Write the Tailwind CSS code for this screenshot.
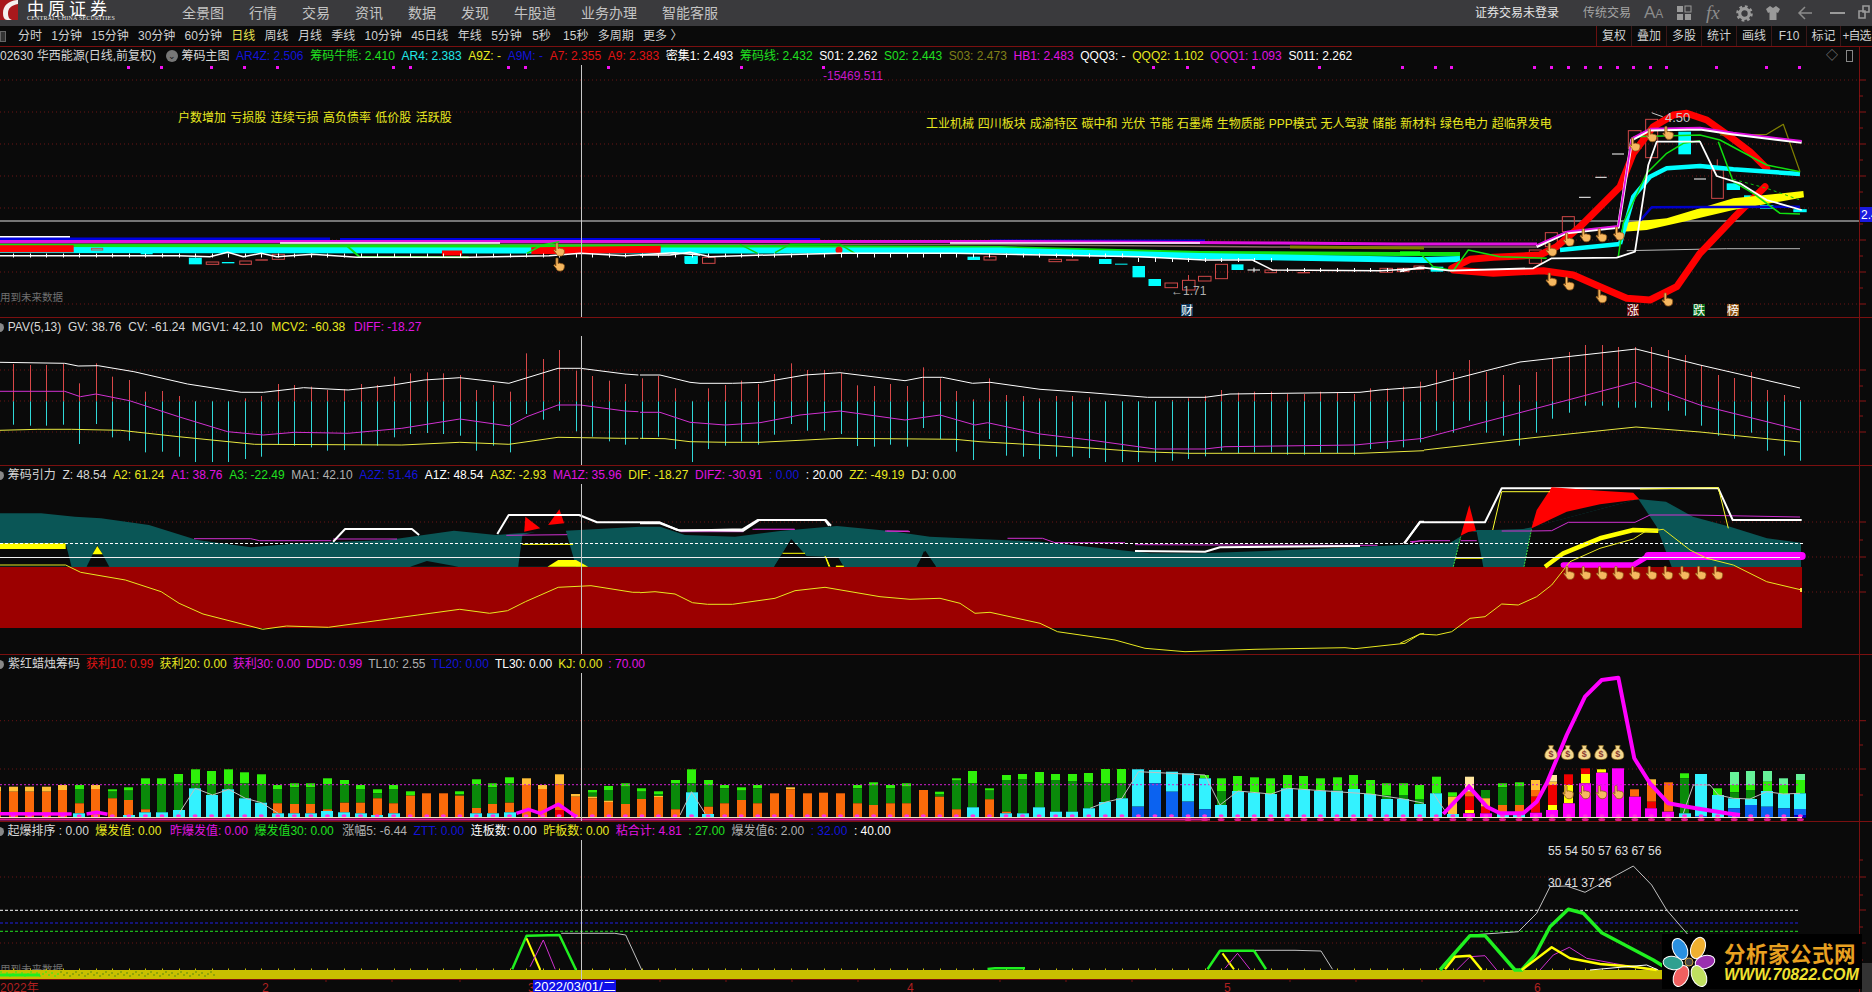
<!DOCTYPE html>
<html lang="zh">
<head>
  <meta charset="UTF-8">
  <title>华西能源 日线</title>
  <script src="https://cdn.jsdelivr.net/npm/@tailwindcss/browser@4"></script>
</head>
<body class="relative w-[1872px] h-[992px] overflow-hidden flex flex-col bg-[#0a0a0a] text-[#d8d8d8] text-xs font-['Liberation_Sans','Noto_Sans_CJK_SC',sans-serif]">

  <!-- shared glyphs -->
  <svg class="absolute w-0 h-0">
    <symbol id="hand" viewBox="0 0 13 15">
      <path d="M3 1.200c0-1.200 2.200-1.200 2.200 0V6l1.600-.4 1.500.5 1.500.2 1.300.8c.6.6.5 2 .3 3-.3 2.400-1.800 3.500-4 3.500-2.300 0-3.500-.8-4.200-2.800L1 8.200c-.3-1 .9-1.400 1.400-.6L3 8.500z" fill="#f6b860" stroke="#8a5418" stroke-width=".8"/>
    </symbol>
    <symbol id="bag" viewBox="0 0 14 16">
      <path d="M4.500 1.200 9.500 1.200 8.600 4.200C12 6 13.600 9 13.200 12c-.3 2.300-2.400 3.300-6.200 3.300S1.100 14.300.8 12C.4 9 2 6 5.400 4.200z" fill="#f4d890" stroke="#8a6a20" stroke-width=".7"/>
      <text x="7" y="13" text-anchor="middle" font-size="9" font-weight="700" fill="#8a3a30">$</text>
    </symbol>
  </svg>

  <!-- title bar -->
  <header class="h-[26px] shrink-0 flex items-center bg-[#3a3a3d] overflow-hidden">
    <div class="w-[182px] h-[26px] flex shrink-0">
      <svg class="w-[20px] h-[26px] shrink-0" viewBox="0 0 20 26">
        <rect width="18" height="20" fill="#f4f0ee"/>
        <path d="M17 0C8 1 3 6 3 13s3 7 7 7H0V0z" fill="#a8181c"/>
        <path d="M18 4C12 5 8 8 8 13s2 7 5 7h5z" fill="#a8181c"/>
      </svg>
      <div class="pl-[7px] flex flex-col">
        <span class="block h-[15px] leading-[15px] text-[17px] text-white font-['Noto_Sans_CJK_SC',sans-serif] tracking-[4px] whitespace-nowrap">中原证券</span>
        <span class="block text-[6px] leading-[7px] text-[#e8e8e8] font-['Liberation_Serif',serif] whitespace-nowrap tracking-[.2px]">CENTRAL CHINA SECURITIES</span>
      </div>
    </div>
    <nav class="flex items-center gap-[25px] text-sm text-[#c4c4c4]">
      <span>全景图</span><span>行情</span><span>交易</span><span>资讯</span><span>数据</span><span>发现</span><span>牛股道</span><span>业务办理</span><span>智能客服</span>
    </nav>
    <div class="ml-auto flex items-center h-full">
      <span class="text-[#e4e4e4]">证券交易未登录</span>
      <span class="ml-[24px] text-[#a4a4a4]">传统交易</span>
      <span class="ml-[13px] w-[20px] text-[#8c8c8c] text-[17px] whitespace-nowrap font-['Liberation_Sans']">A<span class="text-[12px]">A</span></span>
      <svg class="ml-[12px] w-[16px] h-[16px]" viewBox="0 0 16 16" fill="#9a9a9a"><rect x="1" y="1" width="6" height="6"/><rect x="9" y="1" width="6" height="6" fill="none" stroke="#9a9a9a"/><rect x="1" y="9" width="6" height="6"/><rect x="9" y="9" width="6" height="6"/></svg>
      <span class="ml-[14px] w-[18px] text-[#8c8c8c] text-[19px] italic font-['Liberation_Serif',serif]">fx</span>
      <svg class="ml-[12px] w-[17px] h-[17px]" viewBox="0 0 16 16"><circle cx="8" cy="8" r="4.500" fill="none" stroke="#9a9a9a" stroke-width="3"/><circle cx="8" cy="8" r="6.600" fill="none" stroke="#9a9a9a" stroke-width="2.400" stroke-dasharray="2.600 2.600"/></svg>
      <svg class="ml-[12px] w-[16px] h-[16px]" viewBox="0 0 16 16"><path d="M5 1 1 4l2 4 1.500-.8V15h7V7.200L13 8l2-4-4-3-3 2z" fill="#9a9a9a"/></svg>
      <svg class="ml-[16px] w-[16px] h-[16px]" viewBox="0 0 16 16"><path d="M8 2 2 8l6 6M2 8h13" fill="none" stroke="#8c8c8c" stroke-width="1.500"/></svg>
      <span class="ml-[17px] w-[15px] h-[2px] bg-[#9a9a9a]"></span>
      <svg class="ml-[13px] w-[14px] h-[16px] shrink-0" viewBox="0 0 14 16"><path d="M5 1h6v6H5zM1 6h6v7H1z" fill="none" stroke="#9a9a9a" stroke-width="1.600"/></svg>
    </div>
  </header>

  <!-- period toolbar -->
  <div class="h-[21px] shrink-0 flex items-center border-b border-[#7a1010] text-[#d0d0d0]">
    <span class="w-[6px] h-[11px] border border-[#666] bg-[#333] shrink-0"></span>
    <div class="ml-[12px] flex items-center gap-[9.3px] whitespace-nowrap">
      <span>分时</span><span>1分钟</span><span>15分钟</span><span>30分钟</span><span>60分钟</span>
      <span class="text-[#e8e050]">日线</span>
      <span>周线</span><span>月线</span><span>季线</span><span>10分钟</span><span>45日线</span><span>年线</span><span>5分钟</span><span class="px-[1px]">5秒</span><span class="pl-[2px]">15秒</span><span>多周期</span><span>更多 〉</span>
    </div>
    <div class="ml-auto flex h-full w-[276px] shrink-0">
      <span class="w-[35px] flex items-center justify-center border-l border-[#6a1010]">复权</span>
      <span class="w-[35px] flex items-center justify-center border-l border-[#3a1818]">叠加</span>
      <span class="w-[35px] flex items-center justify-center border-l border-[#3a1818]">多股</span>
      <span class="w-[35px] flex items-center justify-center border-l border-[#3a1818]">统计</span>
      <span class="w-[35px] flex items-center justify-center border-l border-[#3a1818]">画线</span>
      <span class="w-[35px] flex items-center justify-center border-l border-[#3a1818]">F10</span>
      <span class="w-[34px] flex items-center justify-center border-l border-[#3a1818]">标记</span>
      <span class="w-[32px] flex items-center justify-center border-l border-[#3a1818] whitespace-nowrap tracking-[-1px]">+自选</span>
    </div>
  </div>

  <!-- chart area + right scale -->
  <main class="flex h-[945px] shrink-0">
    <div class="w-[1859px] shrink-0 flex flex-col">

      <section class="h-[270px] shrink-0 flex flex-col">
        <div class="h-[18px] shrink-0 flex items-center gap-[6.7px] whitespace-nowrap relative">
          <span class="pr-[3px]">02630 华西能源(日线,前复权)</span>
          <span class="w-[12px] h-[12px] rounded-full bg-[#777] text-[#111] text-[9px] leading-[12px] text-center">⌄</span>
          <span class="-ml-[3px]">筹码主图</span>
          <span class="text-[#1414d8]">AR4Z: 2.506</span>
          <span class="text-[#20e020]">筹码牛熊: 2.410</span>
          <span class="text-[#20e8e8]">AR4: 2.383</span>
          <span class="text-[#e8e820]">A9Z: -</span>
          <span class="text-[#1414d8]">A9M: -</span>
          <span class="text-[#e01414]">A7: 2.355</span>
          <span class="text-[#e01414]">A9: 2.383</span>
          <span class="text-white">密集1: 2.493</span>
          <span class="text-[#20e020]">筹码线: 2.432</span>
          <span class="text-white">S01: 2.262</span>
          <span class="text-[#20e020]">S02: 2.443</span>
          <span class="text-[#808018]">S03: 2.473</span>
          <span class="text-[#e014e0]">HB1: 2.483</span>
          <span class="text-white">QQQ3: -</span>
          <span class="text-[#e8e820]">QQQ2: 1.102</span>
          <span class="text-[#e014e0]">QQQ1: 1.093</span>
          <span class="text-white">S011: 2.262</span>
          <span class="absolute left-[1826px] text-[#888]">◇</span>
          <span class="absolute left-[1846px] w-[7px] h-[12px] border border-[#888]"></span>
        </div>
        <svg id="p1" class="block" width="1859" height="252" viewBox="0 65 1859 252"></svg>
      </section>

      <section class="h-[148px] shrink-0 flex flex-col border-t border-[#7a1010]">
        <div class="h-[18px] shrink-0 flex items-center gap-[6.7px] whitespace-nowrap">
          <span class="-ml-[5px] w-[9px] h-[9px] rounded-full bg-[#888]"></span>
          <span class="-ml-[3px]">PAV(5,13)</span><span>GV: 38.76</span><span>CV: -61.24</span><span>MGV1: 42.10</span>
          <span class="ml-[2px] text-[#e8e820]">MCV2: -60.38</span>
          <span class="ml-[2px] text-[#e014e0]">DIFF: -18.27</span>
        </div>
        <svg id="p2" class="block" width="1859" height="129" viewBox="0 336 1859 129"></svg>
      </section>

      <section class="h-[189px] shrink-0 flex flex-col border-t border-[#7a1010]">
        <div class="h-[18px] shrink-0 flex items-center gap-[6.7px] whitespace-nowrap">
          <span class="-ml-[5px] w-[9px] h-[9px] rounded-full bg-[#888]"></span>
          <span class="-ml-[3px]">筹码引力</span><span>Z: 48.54</span>
          <span class="text-[#e8e820]">A2: 61.24</span>
          <span class="text-[#e014e0]">A1: 38.76</span>
          <span class="text-[#20e020]">A3: -22.49</span>
          <span class="text-[#b0b0b0]">MA1: 42.10</span>
          <span class="text-[#1414d8]">A2Z: 51.46</span>
          <span class="text-white">A1Z: 48.54</span>
          <span class="text-[#e8e820]">A3Z: -2.93</span>
          <span class="text-[#e014e0]">MA1Z: 35.96</span>
          <span class="text-[#e8e820]">DIF: -18.27</span>
          <span class="text-[#e014e0]">DIFZ: -30.91</span>
          <span class="text-[#1414d8]">: 0.00</span>
          <span class="text-white">: 20.00</span>
          <span class="text-[#e8e820]">ZZ: -49.19</span>
          <span class="text-[#e8e8c0]">DJ: 0.00</span>
        </div>
        <svg id="p3" class="block" width="1859" height="170" viewBox="0 484 1859 170"></svg>
      </section>

      <section class="h-[167px] shrink-0 flex flex-col border-t border-[#7a1010]">
        <div class="h-[18px] shrink-0 flex items-center gap-[6px] whitespace-nowrap">
          <span class="-ml-[5px] w-[9px] h-[9px] rounded-full bg-[#888]"></span>
          <span class="-ml-[2px]">紫红蜡烛筹码</span>
          <span class="text-[#e01414]">获利10: 0.99</span>
          <span class="text-[#e8e820]">获利20: 0.00</span>
          <span class="text-[#e014e0]">获利30: 0.00</span>
          <span class="text-[#e014e0]">DDD: 0.99</span>
          <span class="text-[#b0b0b0]">TL10: 2.55</span>
          <span class="text-[#1414d8]">TL20: 0.00</span>
          <span class="text-white">TL30: 0.00</span>
          <span class="text-[#e8e820]">KJ: 0.00</span>
          <span class="text-[#e014e0]">: 70.00</span>
        </div>
        <svg id="p4" class="block" width="1859" height="148" viewBox="0 673 1859 148"></svg>
      </section>

      <section class="h-[158px] shrink-0 flex flex-col border-t border-[#7a1010]">
        <div class="h-[18px] shrink-0 flex items-center gap-[6.5px] whitespace-nowrap">
          <span class="-ml-[5px] w-[9px] h-[9px] rounded-full bg-[#888]"></span>
          <span class="-ml-[3px]">起爆排序 : 0.00</span>
          <span class="text-[#e8e820]">爆发值: 0.00</span>
          <span class="ml-[2px] text-[#e014e0]">昨爆发值: 0.00</span>
          <span class="text-[#20e020]">爆发值30: 0.00</span>
          <span class="ml-[2px] text-[#b0b0b0]">涨幅5: -6.44</span>
          <span class="text-[#1414d8]">ZTT: 0.00</span>
          <span class="text-white">连板数: 0.00</span>
          <span class="text-[#e8e820]">昨板数: 0.00</span>
          <span class="text-[#e014e0]">粘合计: 4.81</span>
          <span class="text-[#20e020]">: 27.00</span>
          <span class="text-[#b0b0b0]">爆发值6: 2.00</span>
          <span class="text-[#1414d8]">: 32.00</span>
          <span class="text-white">: 40.00</span>
        </div>
        <svg id="p5" class="block" width="1859" height="139" viewBox="0 840 1859 139"></svg>
      </section>

      <svg id="dates" class="block" width="1859" height="13" viewBox="0 979 1859 13"></svg>
    </div>
    <svg id="scale" class="block" width="13" height="945" viewBox="1859 47 13 945"></svg>
  </main>

  <!-- watermark over the bottom right corner -->
  <div class="absolute left-[1662px] top-[934px] w-[200px] h-[55px] bg-black flex items-center">
    <svg class="w-[54px] h-[52px] shrink-0" viewBox="-27 -26 54 52">
      <g stroke="#fff" stroke-width="1">
        <ellipse cx="-9" cy="-13" rx="7" ry="11" transform="rotate(-25 -9 -13)" fill="#2a90e0"/>
        <ellipse cx="9" cy="-14" rx="7" ry="11" transform="rotate(20 9 -14)" fill="#f0b030"/>
        <ellipse cx="16" cy="0" rx="10" ry="6.500" transform="rotate(-15 16 0)" fill="#9a30b0"/>
        <ellipse cx="10" cy="14" rx="7" ry="11" transform="rotate(-25 10 14)" fill="#c0e060"/>
        <ellipse cx="-8" cy="14" rx="7" ry="11" transform="rotate(25 -8 14)" fill="#f06060"/>
        <ellipse cx="-16" cy="1" rx="10" ry="6.500" transform="rotate(10 -16 1)" fill="#30a090"/>
      </g>
      <circle r="4" fill="#444" stroke="#caa040"/>
    </svg>
    <div class="ml-[8px] flex flex-col">
      <span class="text-[21.500px] leading-[27px] font-bold tracking-[.5px] text-[#e8a020] font-['Noto_Sans_CJK_SC',sans-serif] whitespace-nowrap">分析家公式网</span>
      <span class="text-[16px] leading-[18px] font-bold italic text-[#f0e030] font-['Liberation_Sans',sans-serif] whitespace-nowrap">WWW.70822.COM</span>
    </div>
  </div>

  <script>
    // crop offsets used while reading the chart: [x0, y0, scaleX, scaleY]
    const M = {
      P: [0, 0, 1, 1],
      A: [0, 210, 2.24, 3], B: [640, 210, 2, 3], C: [1400, 90, 3, 3],
      D: [0, 460, 1.675, 3], E: [640, 470, 2, 3], F: [1400, 470, 3, 3],
      G: [0, 650, 1.675, 3], H: [1400, 650, 3, 3],
      I: [0, 830, 1.675, 3], J: [1400, 830, 3, 3]
    };
    const px = (z, x) => M[z][0] + x / M[z][2];
    const py = (z, y) => M[z][1] + y / M[z][3];
    const pts = (z, s) => s.trim().split(/\s+/).map(t => {
      const [a, b] = t.split(',');
      return px(z, +a).toFixed(1) + ',' + py(z, +b).toFixed(1);
    }).join(' ');
    const line = (z, s, c, w = 1, extra = '') => `<polyline points="${pts(z, s)}" fill="none" stroke="${c}" stroke-width="${w}" stroke-linejoin="round" ${extra}/>`;
    const poly = (z, s, c) => `<polygon points="${pts(z, s)}" fill="${c}"/>`;
    const box = (z, a, b, c, d, fill, stroke = 'none') => `<rect x="${px(z, a)}" y="${py(z, b)}" width="${(c - a) / M[z][2]}" height="${(d - b) / M[z][3]}" fill="${fill}" stroke="${stroke}"/>`;
    const use = (z, id, x, y, w, h) => `<use href="#${id}" x="${px(z, x) - w / 2}" y="${py(z, y) - h / 2}" width="${w}" height="${h}"/>`;
    const text = (x, y, s, c, size = 12, extra = '') => `<text x="${x}" y="${y}" fill="${c}" font-size="${size}" ${extra}>${s}</text>`;
    const dotted = ys => ys.map(y => `<line x1="0" x2="1859" y1="${y}" y2="${y}" stroke="#6a1414" stroke-dasharray="1 3"/>`).join('');
    const cross = (y1, y2) => `<line x1="581.5" x2="581.5" y1="${y1}" y2="${y2}" stroke="#c8c8c8"/>`;
    const barX = i => 13 + 16.55 * i;
    const crisp = x => Math.round(x) + .5;

    // ---- panel 1: candles + moving average bands
    let s = dotted([80, 112, 144, 176, 208, 240, 272, 304]);
    [128,161,211,244,277,393,410,508,525,608,741,823,1153,1187,1253,1319,1402,1435,1451,1534,1551,1568,1585,1600,1617,1633,1650,1666,1716,1766,1799]
      .forEach(x => s += `<rect x="${x - 1}" y="66" width="3" height="3" fill="#f010f0"/>`);
    s += text(823, 80, '-15469.511', '#c818c8');
    s += text(178, 122, '户数增加 亏损股 连续亏损 高负债率 低价股 活跃股', '#e8e820', 12, 'word-spacing="1"');
    s += text(926, 128, '工业机械 四川板块 成渝特区 碳中和 光伏 节能 石墨烯 生物质能 PPP模式 无人驾驶 储能 新材料 绿色电力 超临界发电', '#e8e820', 12, 'word-spacing=".5"');
    s += text(0, 301, '用到未来数据', '#707070', 10.500);
    s += line('P', '0,221 1859,221', '#e0e0e0');
    s += line('P', '0,237 70,237', '#ffffff', 2);
    s += line('P', '0,239 330,239', '#0000e0', 3) + line('P', '340,239.5 820,239.5', '#0000e0', 3) + line('P', '990,241 1205,241', '#0000c8', 3);
    s += line('P', '0,241.5 1000,241.5 1280,243 1400,244 1537,244', '#e010e0', 3);
    s += line('P', '0,244 1000,244.5 1280,247 1537,247', '#8a6a6a', 1.500);
    s += line('P', '280,243 500,243', '#ffffff', 1.500) + line('P', '950,243 1200,243', '#ffffff', 1.500);
    s += line('P', '1290,247 1424,248', '#808000', 3);
    s += line('P', '0,246 640,246.500 1000,248 1200,253 1400,254 1460,254', '#10e010', 4);
    s += line('P', '0,250 640,250.500 1000,250.500 1200,256 1424,260 1460,259', '#00ffff', 6);
    s += line('A', '0,116 165,116', '#ff0000', 7) + line('A', '1190,122 1480,118', '#ff0000', 7) + line('A', '990,129 1035,129', '#ff0000', 5);
    s += line('B', '0,118 40,118', '#ff0000', 6);
    s += `<circle cx="839" cy="250" r="3.500" fill="#f01010"/>`;
    s += line('A', '775,105 805,140 1050,142', '#10e010', 2) + line('A', '1180,130 1215,105 1253,95', '#10e010', 1.500);
    s += line('B', '200,103 235,130', '#10d010', 1.500) + line('B', '270,128 300,103 400,103 430,130', '#10d010', 1.500);
    // candles
    [[205,115,230,120,0],[462,156,490,163,0],[537,153,563,163,0],[610,133,637,148,0],[315,118,342,133,1],[423,143,452,163,1],[497,156,525,160,1],[1533,138,1563,160,1]]
      .forEach(c => s += box('A', c[0], c[1], c[2], c[3], c[4] ? '#00ffff' : 'none', c[4] ? 'none' : '#d04848'));
    s += box('A', 572, 148, 600, 152, '#d04848');
    [[125,142,150,160,0],[688,140,712,150,0],[818,148,843,155,0],[1050,219,1075,233,0],[1085,211,1110,240,0],[1117,199,1142,213,0],[1151,163,1175,206,0],[1250,180,1273,188,0],[1480,175,1505,187,0],[1515,175,1538,185,0],[1548,168,1568,178,0],
     [90,138,115,162,1],[655,140,680,150,1],[918,147,943,162,1],[950,161,975,164,1],[985,168,1010,202,1],[1017,207,1042,228,1],[1183,163,1207,180,1]]
      .forEach(c => s += box('B', c[0], c[1], c[2], c[3], c[4] ? '#00ffff' : 'none', c[4] ? 'none' : '#d04848'));
    s += box('B', 852, 148, 877, 152, '#d04848') + box('B', 1315, 186, 1340, 190, '#d04848');
    s += line('B', '1097,195 1097,211', '#d04848') + line('B', '1215,180 1240,180', '#fff') + line('B', '1228,173 1228,187', '#fff');
    [[685,122,723,175],[737,88,773,203],[487,380,523,425],[436,428,472,470],[388,480,424,520],[935,240,970,325]]
      .forEach(c => s += box('C', c[0], c[1], c[2], c[3], 'none', '#d04848'));
    s += line('C', '952,208 952,240', '#d04848');
    [[835,125,873,193],[980,280,1020,300],[92,530,130,545],[1032,316,1065,324],[1080,345,1120,356]]
      .forEach(c => s += box('C', c[0], c[1], c[2], c[3], '#00ffff'));
    [[636,192,672],[586,262,620],[537,322,572],[882,267,918]]
      .forEach(c => s += line('C', `${c[0]},${c[1]} ${c[2]},${c[1]}`, '#ffffff'));
    s += line('C', '680,482 780,480 980,476 1200,476', '#b8b8b8');
    // right side lines
    s += line('C', '155,535 210,508 280,502 420,495 470,470 540,410 600,350 660,290 700,190 760,110 820,75 860,70 920,90 990,140 1050,185 1100,235', '#ff0000', 7, 'stroke-linecap="round"');
    s += line('C', '160,540 280,550 430,542 520,555 600,590 680,625 750,630 830,590 900,490 1000,385 1095,290', '#ff0000', 7, 'stroke-linecap="round"');
    s += poly('C', '670,398 800,385 1000,325 1210,303 1212,322 1000,360 850,395 740,420 670,425', '#ffff00');
    s += line('C', '720,392 755,352 1200,350', '#0000c8', 2.500);
    s += line('C', '960,135 1100,133 1150,103 1200,245', '#808000', 1.200);
    s += line('C', '0,488 60,490 100,530 160,542 205,480 300,500 440,505', '#10e010', 1.500);
    s += line('C', '0,490 60,490', '#10ff10', 4);
    s += line('C', '480,480 660,462', '#00ffff', 4.500) + line('C', '660,462 700,320 750,260 800,235 900,228 1000,238 1200,252', '#00ffff', 4.500);
    s += line('C', '655,500 670,400 740,250 800,190 850,160 900,152', '#10e010', 1.500);
    s += line('C', '700,140 900,135 960,150 1100,225 1200,245', '#10e010', 1.500);
    s += line('C', '955,155 1000,275 1060,310 1140,370 1200,372', '#10e010', 1.500);
    s += line('C', '1000,268 1100,295 1200,330', '#10c010', 1, 'stroke-dasharray="3 3"');
    s += line('C', '1180,362 1220,362', '#00ffff', 3);
    s += line('C', '0,544 60,532 150,542 400,535 455,505 650,503 705,485 745,225 770,155 900,155 950,258 1020,280 1100,330 1205,360', '#ffffff', 1.800);
    s += line('C', '410,470 500,428 655,412 695,150 750,120 900,117 1000,132 1205,157', '#ffffff', 3);
    s += line('C', '410,465 500,425 655,408 695,145 750,116 900,113 1000,128 1205,153', '#e010e0', 1.800);
    s += line('A', '0,137 400,137 470,140 510,127 545,140 585,130 620,140 700,133 800,142 1050,142 1230,137 1300,130 1400,137 1510,128 1568,135', '#ffffff', 1.500);
    s += line('B', '0,135 60,135 100,127 140,140 200,137 400,130 630,130 1000,140 1130,150 1225,150 1265,180 1480,182 1568,175', '#ffffff', 1.500);
    for (let i = 0; i < 85; i++) {
      const x = barX(i), y = x < 1130 ? 255.5 : x < 1272 ? 260 : 270;
      s += `<line x1="${crisp(x)}" x2="${crisp(x)}" y1="${y - 2}" y2="${y + 2}" stroke="#ffffff"/>`;
    }
    [[1253,120],[1253,165]].forEach(h => s += use('A', 'hand', h[0], h[1], 13, 15));
    [[455,480],[507,450],[557,437],[605,437],[657,432],[705,165],[755,137],[805,130],[455,570],[507,582],[605,620],[803,630]]
      .forEach(h => s += use('C', 'hand', h[0], h[1], 13, 15));
    s += text(1665, 122, '4.50', '#c8c8c8', 13);
    s += line('C', '755,68 765,72 788,80', '#c8c8c8');
    s += text(1171, 295, '←1.71', '#b0b0b0');
    s += `<rect x="1181" y="304" width="12" height="12" fill="#0f3a60"/>` + text(1181, 315, '财', '#ffffff');
    s += `<rect x="1627" y="304" width="12" height="12" fill="#6a0808"/>` + text(1627, 315, '涨', '#ffffff');
    s += `<rect x="1693" y="304" width="12" height="12" fill="#0a6a1a"/>` + text(1693, 315, '跌', '#ffffff');
    s += `<rect x="1727" y="304" width="12" height="12" fill="#8a5010"/>` + text(1727, 315, '榜', '#ffffff');
    s += cross(65, 317);
    document.getElementById('p1').innerHTML = s;

    // ---- panel 2: PAV
    const tops = [462,465,465,462,520,460,500,510,545,543,558,574,574,574,565,558,522,525,530,540,538,522,525,500,490,487,490,495,540,525,545,430,447,420,482,498,512,522,505,498,535,574,535,525,512,522,492,460,480,480,490,526,528,522,528,472,505,543,568,505,555,558,565,558,558,562,574,574,574,574,570,565,557,540,548,545,545,552,552,545,547,552,535,535,530,515,480,486,450,486,495,525,486,444,426,405,405,411,411,411,420,435,465,495,504,486,540,555,570];
    s = dotted([370, 401, 432]);
    tops.forEach((t, i) => {
      const x = crisp(barX(i)), top = py('A', t), mid = 401.3, bot = top + 60.700;
      s += `<line x1="${x}" x2="${x}" y1="${top}" y2="${mid}" stroke="#d84848"/><line x1="${x}" x2="${x}" y1="${mid}" y2="${bot}" stroke="#30d8d8"/>`;
    });
    s += line('A', '0,457 145,460 175,468 220,467 300,485 420,522 540,547 590,547 680,533 780,540 880,525 950,510 1030,503 1140,520 1250,475 1300,475 1400,492 1430,495', '#ffffff');
    s += line('B', '0,495 40,495 100,517 120,520 185,520 245,517 330,495 400,488 530,512 565,502 605,502 665,520 700,517 800,538 900,548 1015,562 1130,562 1180,552 1440,547 1480,540 1568,530', '#ffffff');
    s += line('P', '1424,386.700 1520,362 1636,349 1700,365 1800,388', '#ffffff');
    s += line('A', '0,544 145,544 180,560 215,552 290,572 400,620 510,665 590,675 660,667 780,670 900,655 1030,627 1140,648 1180,620 1250,585 1300,585 1400,603 1430,605', '#d030d0');
    s += line('B', '0,607 40,607 100,637 170,645 240,638 320,615 400,603 530,630 600,615 670,645 695,638 800,672 900,690 1030,717 1130,717 1170,710 1430,705 1568,685', '#d030d0');
    s += line('P', '1424,438 1530,410 1636,382 1700,405 1800,430', '#d030d0');
    s += line('A', '0,661 85,658 160,658 270,661 400,680 570,703 900,705 1030,697 1140,703 1250,682 1390,685 1430,685', '#e8e840');
    s += line('B', '0,685 50,686 100,695 170,697 240,697 400,685 630,688 680,695 880,712 1000,725 1100,730 1440,730 1568,722', '#e8e840');
    s += line('P', '1424,450 1530,438 1636,427 1700,432 1800,442', '#e8e840');
    s += cross(336, 465);
    document.getElementById('p2').innerHTML = s;

    // ---- panel 3: 筹码引力
    const teal = '#0a5656';
    s = dotted([522, 557, 592]);
    s += `<rect x="0" y="567" width="1802" height="61" fill="#9c0000"/>`;
    s += poly('P', `0,567 0,513.300 41,513.300 75,516.700 101,518.300 149,525 197,540 251,547.300 299,543.300 388,540 454,530.700 496,535 519,533.300 640,526.700 660,526.700 685,535 735,536.700 780,531 837,526 890,531 930,536.700 1040,541.700 1150,553.300 1150,553.300 1200,553.300 1290,550 1424,544 1450,543 1460,536.700 1477,530 1493,530 1523,529 1532,527.300 1638,499 1666,501.700 1693,516.700 1730,526.700 1767,538.300 1801,542.700 1801,567`, teal);
    // black gaps in the teal
    s += poly('D', '0,250 110,250 120,320 0,320', '#0a0a0a') + poly('D', '145,320 163,255 183,320', '#0a0a0a') + poly('D', '687,320 715,303 768,320', '#0a0a0a');
    s += poly('D', '868,320 875,225 945,195 965,320', '#0a0a0a') + poly('D', '1297,320 1325,238 1350,290 1405,295 1412,320', '#0a0a0a') + poly('D', '1535,320 1550,272 1568,320', '#0a0a0a');
    s += poly('E', '268,290 303,208 333,258 395,262 408,290', '#0a0a0a') + poly('E', '555,290 568,243 592,290', '#0a0a0a');
    s += poly('F', '160,291 182,200 208,185 230,185 250,291', '#0a0a0a') + poly('F', '372,291 395,172 715,87 770,170 815,291', '#0a0a0a');
    // yellow pieces
    s += box('D', 0, 250, 110, 267, '#ffff00') + poly('D', '155,283 163,258 172,283', '#ffff00') + line('D', '875,253 960,253', '#ffff00') + poly('D', '917,320 935,300 965,300 985,320', '#ffff00');
    s += line('D', '1383,290 1390,320', '#ffff00') + line('D', '1400,319 1412,319', '#ffff00');
    s += line('E', '285,250 330,250', '#ffff00') + line('E', '370,258 378,290', '#ffff00') + line('E', '392,289 408,289', '#ffff00');
    s += line('F', '165,264 250,264', '#ffff00', 1.500);
    // red wedges
    s += poly('D', '880,170 905,205 878,215', '#ff0000') + poly('D', '937,148 945,190 918,195', '#ff0000');
    s += poly('F', '182,197 208,105 228,182 205,186', '#ff0000');
    s += line('F', '160,290 182,200', '#40e040', 1, 'stroke-dasharray="2 1"') + line('F', '372,290 395,175', '#40e040', 1, 'stroke-dasharray="2 1"');
    // purple
    ['325,236 420,236 435,242 555,242','558,237 665,237','848,226 950,224','1140,215 1245,215','1265,208 1330,208','1485,213 1522,213'].forEach(p => s += line('D', p, '#d030d0'));
    ['225,178 310,178','490,183 540,185','735,205 805,205 830,218 970,218','990,224 1380,226 1475,226','1540,215 1568,212'].forEach(p => s += line('E', p, '#d030d0'));
    ['35,218 60,212 150,212','182,212 230,212','305,183 395,183 455,182 505,157 705,157 750,135 870,135 1200,141'].forEach(p => s += line('F', p, '#d030d0'));
    // white steps
    ['833,222 852,165 970,165 1000,187 1105,187 1135,210 1245,212 1272,180 1383,180 1392,197','558,245 578,207 690,207 702,225'].forEach(p => s += line('D', p, '#ffffff', 2));
    ['0,160 40,160 80,182 205,178 235,150 370,150 378,167','990,243 1130,245 1160,232 1440,228','1530,218 1560,155 1568,155'].forEach(p => s += line('E', p, '#ffffff', 2));
    s += line('F', '12,220 60,157 255,157 305,55 955,55 998,150 1205,150', '#ffffff', 2);
    s += poly('F', '395,172 410,120 455,52 600,62 700,68 718,88 600,103 500,125 395,175', '#ff0000');
    s += line('F', '278,180 305,65 450,65', '#ffff30') + line('F', '720,57 955,53 985,175', '#ffff30');
    // thick yellow + magenta on the right
    s += line('F', '435,290 490,250 600,205 700,180 775,182', '#ffff00', 4.500);
    s += line('F', '490,285 700,285 745,258 1205,258', '#ff00ff', 5.500, 'stroke-linecap="round"') + line('F', '745,258 1205,258', '#ff00ff', 8, 'stroke-linecap="round"');
    s += line('P', '0,543.500 1803,543.500', '#ffffff', 1.200, 'stroke-dasharray="3 2"');
    s += line('P', '0,557.500 1800,557.500', '#f0f0f0', 1);
    // slow yellow line
    s += line('D', '0,315 110,315 135,337 210,360 270,395 300,430 340,462 440,508 480,498 550,502 700,465 770,448 820,460 850,452 880,425 935,382 990,377 1060,397 1072,397', '#e8e820');
    s += line('E', '0,368 30,365 70,372 105,398 135,403 185,403 270,385 310,362 370,352 480,380 540,388 600,385 640,400 670,430 700,427 800,460 835,485 950,510 1010,535 1090,545 1230,538 1410,533 1430,536 1530,520 1560,492 1568,490', '#e8e820');
    s += line('F', '0,520 60,492 110,495 155,485 210,445 255,440 305,402 355,405 410,380 455,345 510,275 600,235 700,207 735,185 790,178 870,240 920,265 1000,285 1100,335 1205,360', '#e8e820');
    [508,557,606,655,705,755,803,853,903,953].forEach(x => s += use('F', 'hand', x, 310, 13, 15));
    s += `<rect x="1800" y="588" width="2" height="4" fill="#ffe040"/>`;
    s += cross(484, 654);
    document.getElementById('p3').innerHTML = s;

    // ---- panel 4: stacked bars
    const C = { l: '#2ef00a', d: '#0a8a0a', o: '#fa6a0a', q: '#ffc038', c: '#33f2ff', b: '#0b62f0', m: '#ff00ff', r: '#f00000', t: '#66f29a', n: '#0000c0', y: '#ffff00', w: '#ffe8a0' };
    const bars = ['q410 o425','q410 o425','q410 o425','q410 o425','q405 o420','l405 d417 o460 c490','q405 o417','l418 d425 o445','l412 d422 o450 c495','l385 d402 o478 c487','l385 d402 c487','l372 d398 c480','l358 d400 c415','l363 d403 c435','l358 d403 c418','l367 d400 c445','l373 d403 c458','l405 d417 o460 c490','l400 d412 o462 c490','l400 d412 o462 c490','l385 d403 o478 c483','l390 d403 o458 c487','l405 d417 o458 c490','l418 d430 o445 c495','l405 d417 o460 c490','l424 o437','o430','o430','l424 d433 o437','l388 d403 o474 c490','l400 d412 o462 c490','l382 d400 o458 c487','q385 o405','q405 o417','q373 o404 r480','q432 o440','l420 d428 q440 o445','l408 d420 q452 o456','l400 d410 o462','l415 d425 o447','l424 d432 q438 o441','l390 d400 o478','l358 d400 c427','l390 d405 o470 c492','l405 d415 o460','l412 d422 o450','l405 d415 o460','o430','q412 o418','o430','o428','o430','l405 d415 o460','l397 d407 o465','l405 d415 o460','l400 d410 o460','o420','l425 d432 o440','l385 d392 o478','l363 d400 c472','l415 d422 o448','l375 d390 o485 c490','l372 d387 c490','l366 d400 c472','l372 d390 c485','l372 d393 c485','l369 d397 c475','l357 d400 c456','l357 d400 c445','c358 b470','c360 b400','c365 b425','c370 b455','l375 c385 b478','l385 d423 c465','l378 c423','l382 c428','l385 c432','l375 c415','l378 c418','l385 c422','l382 c422','l375 c417','l390 c432','l400 d435 c447','l400 d435 c447','l405 d447 c462','l380 c430','l427 q440 c492','w380 o425 r440 y480 m490','d420 q445 r470 m490','l400 d412 o465 c490','l397 d410 o465 c488','q390 o420 r440 m488','w375 q395 r405 y465 m480','r373 y405 m460','r355 y372 m400','y358 m368','m355','o418 m440','q388 o405 r455 m475','o397 m485','l370 d385 c490','c372 b498','l415 c435','t366 l405 d427 c445 b475','t363 l405 d420 c447 b465','t363 l395 c423 b470','t385 l405 c432 b475','t372 l390 c430 b477 n495'];
    s = dotted([720.700, 769]);
    bars.forEach((b, k) => {
      const x = barX(k - 1), parts = b.split(' ');
      parts.forEach((p, j) => {
        const key = p[0], y1 = py('G', +p.slice(1));
        const y2 = py('G', j + 1 < parts.length ? +parts[j + 1].slice(1) : 503);
        const w = 'cbmn'.includes(key) ? 12 : 9;
        s += `<rect x="${Math.round(x - w / 2)}" y="${y1.toFixed(1)}" width="${w}" height="${(y2 - y1).toFixed(1)}" fill="${C[key]}"/>`;
      });
    });
    s += line('P', '0,784.700 1800,784.700', '#d020d0', 1, 'stroke-dasharray="2 2"');
    s += line('G', '300,490 327,415 356,435 383,418 411,445 438,458 466,490', '#c0c0c0');
    s += line('E', '80,1035 103,965 130,1030', '#c0c0c0') + line('E', '900,1015 932,996 964,985 997,905 1130,915 1160,1005 1196,963 1262,972 1295,955 1460,972 1527,987 1568,1000', '#c0c0c0');
    s += line('H', '100,430 140,490', '#c0c0c0') + line('H', '850,490 880,405 930,405 955,435 1000,445 1050,447 1100,425 1150,432 1200,430', '#c0c0c0');
    // magenta line + base strip
    for (let i = 0; i < 110; i++) s += `<ellipse cx="${barX(i - 1)}" cy="${py('G', 497)}" rx="2.500" ry="1.500" fill="#ff30e0"/>`;
    s += `<rect x="0" y="818.500" width="1210" height="2" fill="#e01890"/>`;
    for (let i = 72; i < 110; i++) s += `<ellipse cx="${barX(i - 1)}" cy="819.500" rx="3.500" ry="1.500" fill="#e01890"/>`;
    s += line('P', '0,817.500 1802,817.500', '#f0e8c0', 1);
    s += line('G', '0,491 120,492', '#ff00ff', 3.500) + line('G', '145,492 162,487 180,493', '#ff00ff', 3.500);
    s += line('G', '865,490 885,478 905,490 935,463 965,500', '#ff00ff', 3.500);
    s += line('H', '130,492 207,410 260,470 300,490 370,490 410,455 440,400 500,255 555,140 605,90 655,83 703,325 750,400 805,460 870,472 920,480 980,490 1020,495', '#ff00ff', 4);
    [453,503,553,603,653].forEach(x => s += use('H', 'bag', x, 307, 14, 16));
    [505,555,605,655].forEach(x => s += use('H', 'hand', x, 428, 13, 15));
    s += cross(673, 821);
    document.getElementById('p4').innerHTML = s;

    // ---- panel 5: 起爆排序
    s = dotted([877, 943]);
    s += line('P', '0,910.300 1800,910.300', '#ffffff', 1, 'stroke-dasharray="3 2"');
    s += line('P', '0,923 1800,923', '#2020e0', 1, 'stroke-dasharray="3 2"');
    s += line('P', '0,931.300 1800,931.300', '#20e020', 1, 'stroke-dasharray="3 2"');
    s += text(0, 973, '用到未来数据', '#707070', 10.500);
    s += `<rect x="0" y="970" width="1802" height="9" fill="#c8c000"/>`;
    for (let i = 0; i < 110; i++) s += `<line x1="${crisp(barX(i - 1))}" x2="${crisp(barX(i - 1))}" y1="968.500" y2="970" stroke="#c8c000"/>`;
    for (let x = 0; x < 215; x += 3) s += `<line x1="${x}" x2="${x + 2}" y1="${972 + x % 5}" y2="${972 + x % 5}" stroke="${x < 60 ? '#20f020' : '#5a8a10'}"/>`;
    s += line('P', '0,975 40,975', '#20f020', 3);
    s += line('I', '858,418 882,317 937,315 965,420', '#20f020', 2.500);
    s += line('I', '882,325 905,420', '#ffff00', 2);
    s += line('I', '888,410 910,330 930,418', '#d030d0');
    s += line('I', '940,310 1030,310 1048,315 1075,420', '#c0c0c0');
    s += line('E', '695,1497 710,1495 770,1495', '#20f020', 2.500);
    s += line('E', '1135,1498 1160,1442 1228,1442 1252,1498', '#20f020', 2.500);
    s += line('E', '1165,1450 1188,1498', '#ffff00', 2) + line('E', '1170,1495 1195,1450 1220,1498', '#d030d0');
    s += line('E', '1230,1441 1310,1441 1362,1443 1385,1498', '#c0c0c0');
    s += line('J', '120,415 210,315 355,305 410,250 450,170 500,168 555,187 700,108 755,165 800,240 865,315', '#c0c0c0');
    s += line('J', '420,420 460,375 508,352 560,385 640,400 750,420', '#d030d0') + line('J', '170,420 210,380 255,377 290,420', '#d030d0');
    s += line('J', '120,420 210,317 255,317 345,420 365,420 405,375 450,290 505,238 550,250 605,308 760,390 800,415', '#20f020', 3.500);
    s += line('J', '135,418 165,380 210,377 245,420', '#ffff00', 2.500) + line('J', '365,420 455,352 510,385 600,402 700,410 770,420', '#ffff00', 2.500);
    s += line('J', '570,420 680,410 740,405 775,420', '#ffffff', 1);
    s += text(1548, 855, '55 54 50 57 63 67 56', '#e0e0e0', 12);
    s += text(1548, 887, '30 41 37 26', '#e0e0e0', 12);
    s += cross(840, 979);
    document.getElementById('p5').innerHTML = s;

    // ---- date axis
    s = `<line x1="0" x2="1859" y1="979.500" y2="979.500" stroke="#7a1010"/><line x1="581.5" x2="581.5" y1="979" y2="992" stroke="#c8c8c8"/>`;
    s += text(0, 991.500, '2022年', '#b02020') + text(262, 991.500, '2', '#b02020') + text(528, 991.500, '3', '#b02020') + text(907, 991.500, '4', '#b02020') + text(1224, 991.500, '5', '#b02020') + text(1534, 991.500, '6', '#b02020');
    [326, 392, 460, 660, 726, 792, 858, 1000, 1066, 1132, 1290, 1356, 1422, 1484].forEach(x => s += `<line x1="${x}" x2="${x}" y1="980" y2="982" stroke="#7a1010"/>`);
    s += `<rect x="533" y="980" width="83" height="12" fill="#1010e8"/>` + text(534, 991, '2022/03/01/二', '#ffffff', 13);
    document.getElementById('dates').innerHTML = s;

    // ---- right scale
    s = `<line x1="1859.5" x2="1859.5" y1="47" y2="992" stroke="#7a1010"/>`;
    [80,112,144,176,208,240,272,304,370,401,432,522,557,592,720.700,769,877,910,943].forEach(y => s += `<line x1="1859" x2="1866" y1="${y}" y2="${y}" stroke="#8a1414"/>`);
    [96,128,160,192,224,256,288,386,416,540,575,745,795,860,895,927,960].forEach(y => s += `<line x1="1859" x2="1863" y1="${y}" y2="${y}" stroke="#8a1414"/>`);
    [317,465,654,821,979].forEach(y => s += `<line x1="1859" x2="1872" y1="${y}.5" y2="${y}.5" stroke="#7a1010"/>`);
    s += `<rect x="1860" y="207" width="12" height="15" fill="#1a1ae0"/>` + text(1861, 219, '2.4', '#ffffff');
    s += `<rect x="1862" y="963" width="10" height="29" fill="#333333"/>`;
    document.getElementById('scale').innerHTML = s;
  </script>
</body>
</html>
